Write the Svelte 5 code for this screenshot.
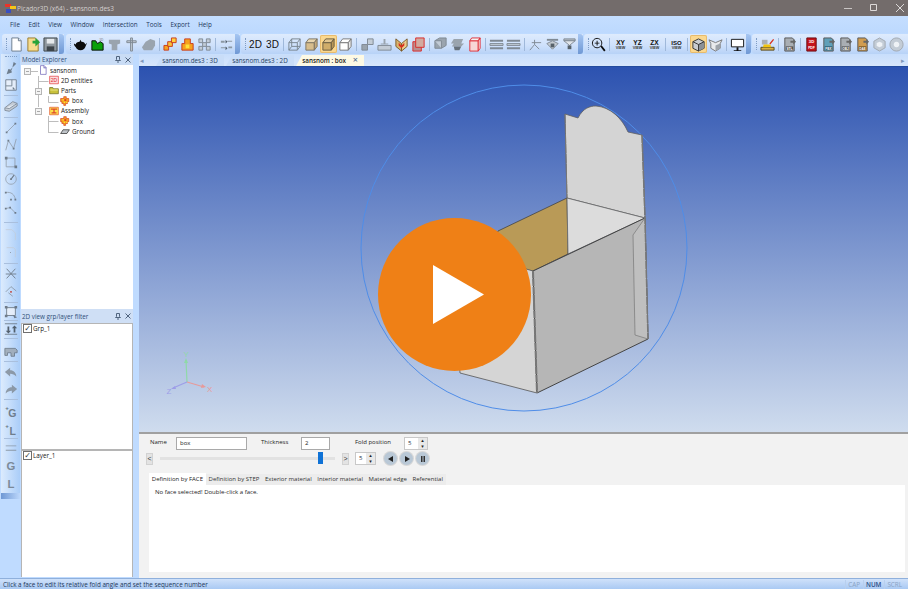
<script>
  const p = (f, s, d) => ({ f, s, d });
  const t = (text, x, y, size, f = "#111", w = 700) => ({ text, x, y, size, f, w });
  const grey = "#9aa4ae";
  const greyD = "#7f8993";
  const greyL = "#c3ccd6";

  const cube = (top, side, front, line) => [
    p(front, line, "M2 6h9v8H2z"),
    p(top, line, "M2 6l3-4h9l-3 4z"),
    p(side, line, "M11 6l3-4v8l-3 4z"),
  ];
  const sheet = (label, band, f = "#a9aeb3") => [
    p(f, "#555", "M3 1h8l2 2v12H3z"),
    p("#666", "none", "M9 4h3V2l3 3-3 3V6H9z"),
    p(band, "none", "M4 10h8v4H4z"),
    t(label, 8, 13.6, 3.4, "#fff"),
  ];
  const flower = [
    p("#f2a31d", "#d3321c", "M6 1h4v3h4v5h-2v3H9v3H6v-3H3V9H1V4h5z"),
    p("#e5372a", "none", "M7 5h3v3H7z"),
    p("#ffe23a", "none", "M4 5h2v2H4zM10 9h2v2h-2zM6 9h2v2H6z"),
  ];

  const icons = {
    doc: [p("#fff", "#6b7b8c", "M3 1h7l3 3v11H3z"), p("#dfe7f0", "#6b7b8c", "M10 1v3h3")],
    open: [p("#f6dc8e", "#9a7b2a", "M2 1h8l3 3v11H2z"), p("#27a33a", "none", "M7 4h3V1l5 4.5L10 10V7H7z")],
    save: [p("#8f979e", "#3d444a", "M1 1h14v14H1z"), p("#e6e9ec", "none", "M4 2h8v5H4z"), p("#3d444a", "none", "M4 10h8v5H4z")],
    teapot: [p("#0b0b0b", "none", "M8 3l1 2c3 0 4 2 4 3l2-2-2 5c-1 2-2 3-5 3s-4-1-5-3C2 10 1 9 1 7l2 1c0-2 2-3 4-3z")],
    green: [p("#0aa00a", "#0b0b0b", "M2 4h4l2 3 3-2 3 2v7H2z"), t("3D", 12, 4, 3.5, grey)],
    torso: [p(grey, "none", "M2 3h12v4l-3 1v6H5V8L2 7z")],
    post: [p(greyL, greyD, "M7 1h2v14H7zM3 4h10v2H3z")],
    blob: [p(grey, "none", "M1 11l4-6 5-3 5 2v5l-3 5H3z")],
    cubes: [p("#f6a21f", "#c93a1b", "M1 9h5v5H1z"), p("#f8c23a", "#c93a1b", "M5 5h5v5H5z"), p("#ffd23f", "#c93a1b", "M9 1h5v5H9z")],
    cubes2: [p("#f6a21f", "#c93a1b", "M5 2h6v5h3v7H2V7h3z"), p("#ffe23a", "none", "M6 8h4v4H6z")],
    grid: [p(greyL, greyD, "M2 2h4v4H2zM10 2h4v4h-4zM2 10h4v4H2zM10 10h4v4h-4zM6 6h4v4H6z")],
    flows: [p("#8c98a3", "none", "M2 4h4v2H2zM9 4h5v1H9zM2 11h5v1H2zM10 10h4v2h-4z"), p("#4d5964", "none", "M7 3l2 2-2 2zM7 10l2 2-2 2z")],
    wire: [p("none", "#7a858f", "M2 6h9v8H2zM2 6l3-4h9l-3 4M11 14l3-4V2M5 2v8h9M2 14l3-4")],
    solidTan: cube("#e8d5ae", "#c5a97a", "#d7bd8d", "#7d7462"),
    shaded: cube("#e2c68f", "#b89758", "#d0ad6a", "#6a5c40"),
    white: cube("#fff", "#e6e6e6", "#fff", "#7a7a7a"),
    blocks: [p(grey, greyD, "M2 8h6v6H2z"), p(greyL, greyD, "M8 2h6v6H8z")],
    slab: [p(greyL, greyD, "M1 9h14v5H1z"), p(grey, "none", "M7 2h2v5H7zM4 7h8v1H4z")],
    fold: [p("#d9b36c", "#7b5a28", "M2 2l6 5v8l-6-5z"), p("#e9cc8e", "#7b5a28", "M14 2l-6 5v8l6-5z"), p("#d8301e", "none", "M5 6l3 3 3-3v3l-3 3-3-3z")],
    cubeRed: [p("#b88e8e", "#db2a2a", "M2 5h9v10H2z"), p("#d2aaa0", "#db2a2a", "M5 1h9v10H5z")],
    slabs: [p(grey, greyD, "M2 4l5-3h7v8l-5 3H2z"), p(greyL, greyD, "M2 4h7v8")],
    capsule: [p(grey, "none", "M4 2h10l-2 5h3l-3 3H2l2-3H1z"), p("#67717b", "none", "M4 10h8l-2 4H5z")],
    cubeRed2: [p("#f7d7d7", "#e0313a", "M3 4h9v11H3z"), p("#f2f2f2", "#e0313a", "M3 4l2-3h9l-2 3zM12 4l2-3v11l-2 3z")],
    rows: [p(greyD, "none", "M1 3h14v2H1zM1 11h14v2H1z"), p(greyL, greyD, "M1 7h14v2H1z")],
    figure: [p("none", greyD, "M2 14l5-6V3M4 6h10M7 8l5 5")],
    eye: [p(greyD, "none", "M2 2h12v2H2z"), p("#c5ccd3", greyD, "M2 7l6-3 6 3-6 6z"), p("#566069", "none", "M6 7h4v4H6z")],
    eye2: [p("#b5bdc5", greyD, "M2 2h12v2H2z"), p("#e0e5ea", greyD, "M2 4h12l-6 5z"), p("#566069", "none", "M6 9h4v4H6z")],
    zoom: [p("none", "#0b0b0b", "M6.500 1.500a5 5 0 1 0 .01 0z"), p("#0b0b0b", "none", "M4 6h2V4h1v2h2v1H7v2H6V7H4zM10 10l1.500-1 4 5-1.500 1.500z")],
    xy: [t("XY", 8, 8, 7), t("VIEW", 8, 13, 4, "#333")],
    yz: [t("YZ", 8, 8, 7), t("VIEW", 8, 13, 4, "#333")],
    zx: [t("ZX", 8, 8, 7), t("VIEW", 8, 13, 4, "#333")],
    iso: [t("ISO", 8, 8, 6.500), t("VIEW", 8, 13, 4, "#333")],
    isoBox: [p("#c9ccd0", "#333", "M8 2l6 3v7l-6 3-6-3V5z"), p("#8b9096", "none", "M8 8l6-3v7l-6 3z"), p("none", "#333", "M2 5l6 3 6-3M8 8v7")],
    isoOpen: [p("#e8eaec", "#777", "M1 3l7 3 7-3-2 4v5l-5 3-5-3V7z"), p("#9ea4aa", "none", "M8 9l5-2v5l-5 3z")],
    screen: [p("#fff", "#111", "M1.500 2.500h13v8h-13z"), p("#111", "none", "M7 11h2v3h3v1H4v-1h3z")],
    wizard: [p("#a9aeb3", "none", "M2 3h6v5H2z"), p("#d8b048", "#5a4a1c", "M1 11h14v3H1z"), p("#f1c40f", "none", "M4 8h7l1 3H3z"), p("#d8301e", "none", "M10 7l4-5 1 1-4 5z")],
    stl: sheet("STL", "#555"),
    pdf: [p("#c4141c", "#6b0b10", "M3 1h10v14H3z"), t("3D", 8, 6.500, 4.500, "#fff"), t("PDF", 8, 13, 3.6, "#fff")],
    fbx: sheet("FBX", "#24536b", "#5f9fb8"),
    obj: sheet("OBJ", "#555"),
    dae: sheet("DAE", "#6a4a1d", "#d19c4f"),
    hex: [p(greyL, "#a0a8b0", "M8 1l6 3.500v7L8 15l-6-3.500v-7z"), p("#eef2f6", "none", "M8 5l3 1.500v3L8 11l-3-1.500v-3z")],
    ring: [p(greyL, "#a0a8b0", "M8 1a7 7 0 1 0 .01 0z"), p("#eef2f6", "none", "M8 5a3 3 0 1 0 .01 0z")],

    arrowTool: [p("#5b6772", "none", "M11 1l3 2-6 6 1 4-6 2 2-6 4 1z")],
    window: [p("#eef3fa", "#5b6772", "M2 2h12v12H2z"), p("none", "#5b6772", "M2 9h7V2"), p("#5b6772", "none", "M10 10l3 3h-3z")],
    eraser: [p("#c5c9ce", "#6f7780", "M1 10l9-7 5 2v3l-9 6-5-1z"), p("#e9ecef", "#6f7780", "M1 10l5 1 9-6")],
    line: [p("none", "#8a949e", "M3 13L13 3"), p("#59636d", "none", "M2 12h2v2H2zM12 2h2v2h-2z")],
    poly: [p("none", "#8a949e", "M2 14L5 3l6 9 3-11"), p("#59636d", "none", "M4 2h2v2H4zM10 11h2v2h-2z")],
    rect: [p("none", "#8a949e", "M2.500 3.500h10v10h-10z"), p("#59636d", "none", "M1 2h3v3H1zM12 12h3v3h-3z")],
    circle: [p("none", "#8a949e", "M8 2a6 6 0 1 0 .01 0z"), p("#59636d", "none", "M7 7h2v2H7zM11 3l1 1-3 4-1-1z")],
    arc: [p("none", "#8a949e", "M2 4c6-1 10 2 11 8"), p("#59636d", "none", "M1 3h2v2H1zM12 11h2v2h-2zM7 11h2v2H7z")],
    arc2: [p("none", "#8a949e", "M2 4l5-1 6 6"), p("#59636d", "none", "M1 3h2v2H1zM12 8h2v2h-2zM6 2h2v2H6z")],
    cornerA: [p("none", greyL, "M2 3h7l4 4v8")],
    cornerB: [p("none", greyL, "M3 3h8l2 2v9"), p(greyD, "none", "M7 8h1v1H7z")],
    scissors: [p("none", "#59636d", "M3 2l10 11M13 2L3 13M2 8h12")],
    diamond: [p("none", greyD, "M2 9l6-6 6 5M5 10l5 4"), p("#c0392b", "none", "M7 8h2v2H7z")],
    frame: [p("#eef3fa", "#59636d", "M3 3h10v9H3z"), p("#59636d", "none", "M1 1h3v3H1zM12 1h3v3h-3zM1 11h3v3H1zM10 11l5 3-3 1z")],
    split: [p("none", "#59636d", "M1 2h14M1 14h14"), p("#38424b", "none", "M4 5v5h-2l3 3 3-3H6V5zM11 12V7H9l3-3 3 3h-2v5z")],
    tool: [p(grey, "#5b6772", "M1 5h12l2 2v3h-3v4H8v-4H4v3H1z")],
    undo: [p(greyD, "none", "M7 3L1 8l6 5v-3c3 0 5 1 7 3 0-4-3-7-7-7z")],
    redo: [p(greyD, "none", "M9 3l6 5-6 5v-3c-3 0-5 1-7 3 0-4 3-7 7-7z")],
    plusG: [t("+", 3.500, 7, 7, "#4c5761"), t("G", 9.500, 15, 12, "#5b6772")],
    plusL: [t("+", 3.500, 7, 7, "#4c5761"), t("L", 10, 15, 12, "#5b6772")],
    dbl: [p(greyD, "none", "M2 5h12v1H2zM2 10h12v1H2z")],
    g: [t("G", 8, 13, 13, "#6a7580")],
    l: [t("L", 8, 13, 13, "#6a7580")],
    flower,
    ents: [p("#fbdede", "#e0252c", "M1 2h14v12H1z"), t("2D", 8, 11, 8, "#e0252c", 400)],
    folder: [p("#c9c23c", "#5d5a14", "M1 4h5l1 2h8v8H1z"), p("#e3de76", "none", "M2 7h12v2H2z")],
    assembly: [p("#fbe04d", "#e0452c", "M1 2h14v12H1z"), p("#e0452c", "none", "M3 4h10v2H9v4h3v2H4v-2h3V6H3z")],
    ground: [p("#bfc4c9", "#111", "M1 12l4-6h10l-4 6z")],
    pageP: [p("#fff", "#5a4fae", "M4 1h6l3 3v11H4z"), p("#5a4fae", "none", "M10 1v3h3v1H9V1z")],
  };

  const groups = [
    { left: 2, width: 62, items: ["doc", "open", "save"] },
    { left: 66, width: 174, items: ["teapot", "green", "torso", "post", "blob", "|", "cubes", "cubes2", "grid", "|", "flows"] },
    { left: 241, width: 342, items: ["#2D", "#3D", "|", "wire", "solidTan", "*shaded", "white", "|", "blocks", "slab", "fold", "cubeRed", "|", "slabs", "capsule", "cubeRed2", "|", "rows", "rows", "|", "figure", "eye", "eye2"] },
    { left: 584, width: 166, items: ["zoom", "|", "xy", "yz", "zx", "|", "iso", "|", "*isoBox", "isoOpen", "|", "screen"] },
    { left: 752, width: 156, noMore: true, items: ["wizard", "|", "stl", "|", "pdf", "fbx", "obj", "dae", "hex", "ring"] },
  ];

  const leftTools = [
    ["arrowTool", 16], ["window", 18], [null, 3], ["eraser", 18], [null, 4], ["line", 18], ["poly", 16], ["rect", 17],
    ["circle", 17], ["arc", 17], ["arc2", 16], [null, 5], ["cornerA", 18], ["cornerB", 18], [null, 4], ["scissors", 17],
    ["diamond", 18], [null, 4], ["frame", 15], [null, 2], ["split", 15], [null, 5], ["tool", 19], [null, 3], ["undo", 17],
    ["redo", 18], [null, 3], ["plusG", 20], ["plusL", 15], [null, 4], ["dbl", 16], ["g", 20], ["l", 16],
  ];

  const menus = ["File", "Edit", "View", "Window", "Intersection", "Tools", "Export", "Help"];

  const tree = [
    { icon: "pageP", label: "sansnom", indent: 38 },
    { icon: "ents", label: "2D entities", indent: 49 },
    { icon: "folder", label: "Parts", indent: 49 },
    { icon: "flower", label: "box", indent: 60 },
    { icon: "assembly", label: "Assembly", indent: 49 },
    { icon: "flower", label: "box", indent: 60 },
    { icon: "ground", label: "Ground", indent: 60 },
  ];

  const tabs = ["Definition by FACE", "Definition by STEP", "Exterior material", "Interior material", "Material edge", "Referential"];
</script>

{#snippet icon(name, size = 15)}
  <svg class="ico" width={size} height={size} viewBox="0 0 16 16">
    {#each icons[name] as part}
      {#if part.text}
        <text x={part.x} y={part.y} font-size={part.size} fill={part.f} font-weight={part.w} text-anchor="middle">{part.text}</text>
      {:else}
        <path d={part.d} fill={part.f} stroke={part.s} stroke-width="1" />
      {/if}
    {/each}
  </svg>
{/snippet}

{#snippet pin()}
  <span class="pin">
    <svg width="6" height="7" viewBox="0 0 6 7"><path d="M1.500 .5h3v3l1 1h-5l1-1zM3 4.500V7" fill="none" stroke="#50647e" /></svg>
    <svg width="6" height="6" viewBox="0 0 6 6"><path d="M.5 .5l5 5M5.500 .5l-5 5" stroke="#50647e" /></svg>
  </span>
{/snippet}

{#snippet spin(value)}
  <span class="spin">
    <span class="spin-val">{value}</span>
    <span class="spin-btns"><i>▴</i><i>▾</i></span>
  </span>
{/snippet}

<div class="app">
  <header class="title">
    <svg width="11" height="11" viewBox="0 0 11 11">
      <path d="M0 1h6v3H0z" fill="#e8332a" /><path d="M5 3h6v3H5z" fill="#f5c518" /><path d="M1 6h5v4H1z" fill="#3a4fc0" />
    </svg>
    <span class="title-text">Picador3D (x64) - sansnom.des3</span>
    <span class="win-btns">
      <svg width="10" height="10" viewBox="0 0 10 10"><path d="M1 5.500h8" stroke="#c9c5c4" /></svg>
      <svg width="10" height="10" viewBox="0 0 10 10"><path d="M1.500 1.500h6v6h-6z" fill="none" stroke="#dcd9d8" /></svg>
      <svg width="10" height="10" viewBox="0 0 10 10"><path d="M1 1l8 8M9 1l-8 8" stroke="#dcd9d8" /></svg>
    </span>
  </header>

  <nav class="menu">
    {#each menus as m}<span>{m}</span>{/each}
  </nav>

  <div class="toolbar">
    {#each groups as g}
      <div class="tgroup" style="width:{g.width}px;margin-left:{g.left}px">
        <span class="grip"></span>
        {#each g.items as item}
          {#if item === "|"}
            <span class="tsep"></span>
          {:else if item[0] === "#"}
            <span class="tbtn big">{item.slice(1)}</span>
          {:else if item[0] === "*"}
            <span class="tbtn active">{@render icon(item.slice(1))}</span>
          {:else}
            <span class="tbtn">{@render icon(item)}</span>
          {/if}
        {/each}
        {#if !g.noMore}<span class="more"></span>{/if}
      </div>
    {/each}
  </div>

  <div class="main">
    <aside class="leftbar">
      <div class="leftbar-tools">
        <span class="vgrip"></span>
        {#each leftTools as [name, h]}
          {#if name}
            <span class="lbtn" style="height:{h}px">{@render icon(name, 14)}</span>
          {:else}
            <span class="lsep" style="height:{h}px"></span>
          {/if}
        {/each}
        <span class="lmore"></span>
      </div>
    </aside>

    <section class="panels">
      <div class="phead explorer"><span>Model Explorer</span>{@render pin()}</div>
      <div class="tree">
        <svg class="tree-lines" width="60" height="80" viewBox="0 0 60 80">
          <path d="M30 6.500h8M38.500 11v31M38.500 16.500h10M48.500 31v6.500h10M48.500 51v17M48.500 56.500h10M48.500 67.500h10" fill="none" stroke="#bdbdbd" />
        </svg>
        <span class="exp" style="left:3px;top:3px"></span>
        <span class="exp" style="left:14px;top:23px"></span>
        <span class="exp" style="left:14px;top:43px"></span>
        {#each tree as row}
          <div class="row" style="padding-left:{row.indent - 21}px">
            {@render icon(row.icon, 10)}<span>{row.label}</span>
          </div>
        {/each}
      </div>
      <div class="phead filter"><span>2D view grp/layer filter</span>{@render pin()}</div>
      <div class="chk-list grp"><label><span class="chk">✓</span>Grp_1</label></div>
      <div class="chk-list layer"><label><span class="chk">✓</span>Layer_1</label></div>
    </section>

    <section class="work">
      <div class="tabstrip">
        <span class="arrow">◂</span>
        <span class="dtab">sansnom.des3 : 3D</span>
        <span class="dtab">sansnom.des3 : 2D</span>
        <span class="dtab on">sansnom : box <b>×</b></span>
        <span class="arrow end">▸</span>
      </div>

      <div class="viewport">
        <svg class="scene" width="769" height="365" viewBox="139 67 769 365">
          <circle cx="524" cy="248" r="163" fill="none" stroke="#4f8de8" stroke-width="1" />

          <!-- open box -->
          <path d="M565 114L578 118C583 108 590 106 596 106C610 107 622 118 628 132L642 135L645 218L567 198Z" fill="#d4d4d4" stroke="#5f5f5f" stroke-width="0.800" />
          <path d="M498 231L567 198L568 254L533 271L480 262Z" fill="#b99a57" stroke="#444" stroke-width="0.800" />
          <path d="M567 198L645 218L568 254Z" fill="#dcdcdc" stroke="#666" stroke-width="0.800" />
          <path d="M533 271L537 393L460 373L452 247Z" fill="#d5d5d5" stroke="#555" stroke-width="0.800" />
          <path d="M533 271L645 218L648 339L537 393Z" fill="#b6b6b6" stroke="#444" stroke-width="1" />
          <path d="M645 218L633 235L635 335L648 339Z" fill="#bfbfbf" stroke="#777" stroke-width="0.700" />
          <path d="M533 271L537 393" stroke="#777" stroke-width="2" stroke-dasharray="7 1" fill="none" />
          <path d="M642 135L645 218L648 339" stroke="#777" stroke-width="1.500" stroke-dasharray="8 1" fill="none" />
          <path d="M565 114L567 198" stroke="#777" stroke-width="1" stroke-dasharray="9 1" fill="none" />

          <!-- axes -->
          <g font-size="8" font-family="'Liberation Sans', sans-serif">
            <path d="M187 382L186 360" stroke="#8fd9a8" stroke-width="1.200" />
            <path d="M184 363l2-5 2 5z" fill="#8fd9a8" />
            <text x="183.500" y="357" fill="#8fd9a8">Y</text>
            <path d="M187 382L204 387" stroke="#e79a9a" stroke-width="1.200" />
            <path d="M202 384l4 3-5 1z" fill="#e79a9a" />
            <text x="207" y="391.500" fill="#e79a9a">X</text>
            <path d="M187 382L173 388" stroke="#9d9de8" stroke-width="1.200" />
            <path d="M175 386l-4 3 5 0z" fill="#9d9de8" />
            <text x="166.500" y="393.500" fill="#9d9de8">Z</text>
          </g>
        </svg>

        <div class="play">
          <svg width="52" height="60" viewBox="0 0 52 60"><path d="M0 0L51 29.500L0 59Z" fill="#fff" /></svg>
        </div>
      </div>

      <div class="bottom">
        <div class="form-row first">
          <span class="lab name">Name</span>
          <span class="input name-in">box</span>
          <span class="lab thick">Thickness</span>
          <span class="input thick-in">2</span>
          <span class="lab fold">Fold position</span>
          {@render spin(5)}
        </div>
        <div class="form-row second">
          <span class="step">&lt;</span>
          <span class="slider"><i></i></span>
          <span class="step">&gt;</span>
          {@render spin(5)}
          <span class="rounds">
            <span class="round"><svg width="8" height="8" viewBox="0 0 8 8"><path d="M6 1v6L1 4z" fill="#222" /></svg></span>
            <span class="round"><svg width="8" height="8" viewBox="0 0 8 8"><path d="M2 1v6l5-3z" fill="#222" /></svg></span>
            <span class="round"><svg width="8" height="8" viewBox="0 0 8 8"><path d="M2 1h1.500v6H2zM4.500 1H6v6H4.500z" fill="#333" /></svg></span>
          </span>
        </div>
        <div class="ptabs">
          {#each tabs as tab, i}<span class:on={i === 0}>{tab}</span>{/each}
        </div>
        <div class="pbody">No face selected! Double-click a face.</div>
      </div>
    </section>
  </div>

  <footer class="status">
    <span class="msg">Click a face to edit its relative fold angle and set the sequence number</span>
    <span class="ind off">CAP</span>
    <span class="ind">NUM</span>
    <span class="ind off">SCRL</span>
  </footer>
</div>

<style>
  :global(body) {
    margin: 0;
    background: #bfdbff;
  }

  .app {
    width: 908px;
    height: 589px;
    display: flex;
    flex-direction: column;
    overflow: hidden;
    background: #bfdbff;
    font-family: "Open Sans", "Noto Sans", sans-serif;
    font-size: 6.3px;
    color: #1f2f46;
  }

  .ico {
    display: block;
    flex: none;
  }

  .ico text {
    font-family: "Liberation Sans", sans-serif;
  }

  .title {
    height: 16px;
    flex: none;
    display: flex;
    align-items: center;
    padding-left: 5px;
    gap: 1px;
    background: #736c6b;
    color: #d3cfce;
    font-size: 6.5px;
  }

  .win-btns {
    margin-left: auto;
    display: flex;
    gap: 16px;
    padding-right: 3px;
  }

  .menu {
    height: 17px;
    flex: none;
    display: flex;
    align-items: center;
    padding-left: 10px;
    gap: 8.500px;
    background: linear-gradient(#c4deff, #bdd9fe);
    color: #1e395b;
  }

  .toolbar {
    height: 21px;
    flex: none;
    position: relative;
  }

  .tgroup {
    position: absolute;
    top: 1px;
    height: 20px;
    display: flex;
    align-items: center;
    box-sizing: border-box;
    padding-left: 4px;
    background: linear-gradient(#deebfd, #cfe1fb 55%, #b7d2f7);
    border-radius: 3px 0 0 3px;
  }

  .grip {
    width: 1px;
    height: 12px;
    margin-right: 1px;
    border-left: 1px dotted #7f9cc4;
  }

  .tbtn {
    width: 17px;
    height: 18px;
    flex: none;
    display: flex;
    align-items: center;
    justify-content: center;
    box-sizing: border-box;
  }

  .tbtn.big {
    font: 10px "Liberation Sans", sans-serif;
    color: #111;
  }

  .tbtn.active {
    background: #fbd88f;
    box-shadow: inset 0 0 0 1px #e7bb6d;
    border-radius: 2px;
  }

  .tsep {
    width: 5px;
    height: 13px;
    flex: none;
    background: linear-gradient(#9fb8da, #9fb8da) center / 1px 100% no-repeat;
  }

  .more {
    margin-left: auto;
    width: 5px;
    height: 20px;
    flex: none;
    background: linear-gradient(#a6c6f2, #6f98d4);
    border-radius: 0 3px 3px 0;
  }

  .main {
    flex: 1;
    min-height: 0;
    display: grid;
    grid-template-columns: 21px 112px 6px 1fr;
  }

  .leftbar {
    grid-column: 1;
  }

  .leftbar-tools {
    width: 19px;
    margin-left: 1px;
    display: flex;
    flex-direction: column;
    align-items: center;
    background: linear-gradient(90deg, #dcebfd, #aacdf8);
  }

  .lbtn .ico {
    opacity: 0.8;
  }

  .vgrip {
    height: 4px;
    width: 12px;
    flex: none;
    border-top: 1px dotted #7f9cc4;
    margin-top: 2px;
    box-sizing: border-box;
  }

  .lbtn {
    display: flex;
    align-items: center;
    justify-content: center;
    flex: none;
  }

  .lsep {
    width: 14px;
    flex: none;
    background: linear-gradient(#a9bfdd, #a9bfdd) center / 100% 1px no-repeat;
  }

  .lmore {
    width: 19px;
    height: 6px;
    margin-top: 1px;
    background: linear-gradient(90deg, #6f98d4, #bcd7fb);
  }

  .panels {
    grid-column: 2;
    display: flex;
    flex-direction: column;
    min-height: 0;
  }

  .phead {
    flex: none;
    display: flex;
    align-items: center;
    justify-content: space-between;
    padding: 0 2px 0 1px;
    color: #2f4f7a;
    background: #c9dcf5;
  }

  .phead.explorer {
    height: 11px;
  }

  .phead.filter {
    height: 14px;
    background: #cfdff5;
  }

  .pin {
    display: flex;
    align-items: center;
    gap: 4px;
  }

  .tree {
    height: 244px;
    flex: none;
    position: relative;
    background: #fff;
  }

  .tree-lines {
    position: absolute;
    left: -21px;
    top: 0;
    overflow: visible;
  }

  .exp {
    position: absolute;
    width: 5px;
    height: 5px;
    border: 1px solid #b5b5b5;
    background: linear-gradient(#a9a9a9, #a9a9a9) center / 3px 1px no-repeat #f4f4f4;
  }

  .row {
    position: relative;
    height: 10.200px;
    display: flex;
    align-items: center;
    gap: 2px;
    white-space: nowrap;
    color: #1a1a1a;
  }

  .chk-list {
    flex: none;
    background: #fff;
    border: 1px solid #b5b5b5;
    box-sizing: border-box;
    color: #1a1a1a;
  }

  .chk-list.grp {
    height: 127px;
    border-width: 1px 1px 1px 1px;
  }

  .chk-list.layer {
    height: 127px;
    border-width: 1px 1px 0 1px;
  }

  .chk-list label {
    display: flex;
    align-items: center;
    height: 9px;
    padding-left: 1px;
  }

  .chk {
    width: 7px;
    height: 7px;
    border: 1px solid #6f6f6f;
    display: flex;
    align-items: center;
    justify-content: center;
    font: 8px/1 "DejaVu Sans", sans-serif;
    color: #333;
    margin-right: 1px;
  }

  .work {
    grid-column: 4;
    display: flex;
    flex-direction: column;
    min-width: 0;
    min-height: 0;
  }

  .tabstrip {
    height: 13px;
    flex: none;
    display: flex;
    align-items: flex-end;
    background: linear-gradient(#c8defc, #d7e6fb);
    border-bottom: 1px solid #234b9e;
    box-sizing: border-box;
  }

  .arrow {
    width: 17px;
    padding-left: 1px;
    box-sizing: border-box;
    color: #7f98bb;
    font-size: 7px;
    line-height: 11px;
  }

  .arrow.end {
    margin-left: auto;
    width: 8px;
  }

  .dtab {
    width: 68px;
    height: 11px;
    margin-right: 2px;
    text-align: center;
    line-height: 11px;
    color: #27415f;
    background: #c9ddf8;
    clip-path: polygon(6px 0, 100% 0, 100% 100%, 0 100%);
    white-space: nowrap;
  }

  .dtab.on {
    background: #fdf9e4;
    color: #1b1b1b;
    font-weight: 600;
  }

  .dtab.on b {
    font-weight: 400;
    color: #3f5f8c;
    margin-left: 5px;
    font-size: 9px;
    line-height: 8px;
  }

  .viewport {
    height: 365px;
    flex: none;
    position: relative;
    overflow: hidden;
    background: linear-gradient(#2c52b0, #cfdcee);
  }

  .scene {
    display: block;
  }

  .play {
    position: absolute;
    left: 239px;
    top: 151px;
    width: 153px;
    height: 153px;
    border-radius: 50%;
    background: #ef8016;
    display: flex;
    align-items: center;
    justify-content: center;
  }

  .play svg {
    margin-left: 9px;
  }

  .bottom {
    flex: 1;
    min-height: 0;
    border-top: 2px solid #a0a0a0;
    background: #f2f2f2;
    box-sizing: border-box;
    padding-left: 7px;
    padding-right: 3px;
    font-size: 6px;
  }

  .form-row {
    display: flex;
    align-items: center;
  }

  .form-row.first {
    height: 13px;
    margin-top: 3px;
    padding-left: 4px;
  }

  .lab {
    color: #222;
    margin-top: -4px;
  }

  .lab.name {
    width: 26px;
  }

  .lab.thick {
    width: 40px;
    margin-left: 14px;
  }

  .lab.fold {
    width: 49px;
    margin-left: 25px;
  }

  .input {
    height: 13px;
    box-sizing: border-box;
    background: #fff;
    border: 1px solid #a9a9a9;
    line-height: 11px;
    padding-left: 3px;
    color: #222;
  }

  .input.name-in {
    width: 71px;
  }

  .input.thick-in {
    width: 29px;
  }

  .spin {
    display: flex;
    width: 24px;
    height: 13px;
    box-sizing: border-box;
    background: #fff;
    border: 1px solid #c8c8c8;
  }

  .spin-val {
    flex: 1;
    line-height: 11px;
    padding-left: 3px;
  }

  .spin-btns {
    width: 9px;
    display: flex;
    flex-direction: column;
    background: #e8e8e8;
  }

  .spin-btns i {
    flex: 1;
    font: normal 5px/5.500px "DejaVu Sans", sans-serif;
    text-align: center;
    color: #222;
  }

  .form-row.second {
    height: 13px;
    margin-top: 2px;
  }

  .form-row.second .spin {
    width: 21px;
    margin-left: 6px;
  }

  .step {
    width: 7px;
    height: 12px;
    flex: none;
    box-sizing: border-box;
    background: #e3e3e3;
    border: 1px solid #d2d2d2;
    display: flex;
    align-items: center;
    justify-content: center;
    font: 7px "Liberation Sans", sans-serif;
    color: #333;
  }

  .slider {
    width: 175px;
    height: 3px;
    margin: 0 7px;
    background: #e2e2e2;
    position: relative;
  }

  .slider i {
    position: absolute;
    left: 158px;
    top: -5px;
    width: 5px;
    height: 12px;
    background: #0f72d6;
  }

  .rounds {
    display: flex;
    gap: 3px;
    margin-left: 8px;
  }

  .round {
    width: 13px;
    height: 13px;
    border-radius: 50%;
    background: #b9c8d6;
    box-shadow: 0 0 0 1px #d8d8d8;
    display: flex;
    align-items: center;
    justify-content: center;
  }

  .ptabs {
    display: flex;
    height: 12px;
    margin-top: 8px;
    margin-left: 3px;
    align-items: flex-end;
  }

  .ptabs span {
    height: 11px;
    line-height: 11px;
    padding: 0 2.800px;
    white-space: nowrap;
    color: #333;
    background: #ececec;
  }

  .ptabs span.on {
    height: 12px;
    background: #fff;
    line-height: 12px;
    color: #222;
  }

  .pbody {
    margin-left: 3px;
    height: 87px;
    background: #fff;
    box-sizing: border-box;
    padding: 3px 6px;
    color: #222;
  }

  .status {
    height: 11px;
    flex: none;
    display: flex;
    align-items: center;
    background: linear-gradient(#cfe1fa, #a9c9f3);
    border-top: 1px solid #8fb0dc;
    box-sizing: border-box;
    padding-left: 3px;
    padding-right: 4px;
    color: #1e395b;
  }

  .msg {
    margin-right: auto;
  }

  .ind {
    padding: 0 2px;
    margin-left: 1px;
    border-left: 1px solid #b8cfee;
    color: #2a4e86;
    font-weight: 600;
  }

  .ind.off {
    color: #8aa3c4;
    font-weight: 400;
  }
</style>
